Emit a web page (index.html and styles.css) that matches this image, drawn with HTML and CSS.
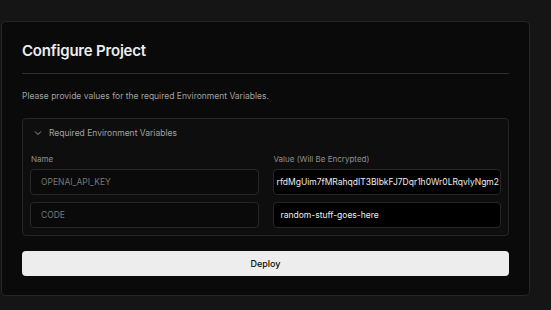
FILE: index.html
```html
<!DOCTYPE html>
<html lang="en">
<head>
  <meta charset="UTF-8" />
  <meta name="viewport" content="width=device-width, initial-scale=1.0"/>
  <title>Configure Project</title>
  <link rel="stylesheet" href="styles.css">
</head>
<body>
  <div class="page">
    <div class="card">
      <h1>Configure Project</h1>
      <div class="divider"></div>
      <p class="intro">Please provide values for the required Environment Variables.</p>

      <div class="env-box">
        <div class="env-summary">
          <svg class="chevron" width="8" height="8" viewBox="0 0 8 8">
            <path d="M1 2.5 L4 5.5 L7 2.5" fill="none" stroke="#9a9a9a" stroke-width="1"/>
          </svg>
          <span>Required Environment Variables</span>
        </div>
        <div class="env-grid">
          <div class="label">Name</div>
          <div class="label">Value (Will Be Encrypted)</div>
          <div class="input name">OPENAI_API_KEY</div>
          <div class="input value scrolled"><span>rfdMgUim7fMRahqdIT3BlbkFJ7Dqr1h0Wr0LRqvlyNgm2</span></div>
          <div class="input name">CODE</div>
          <div class="input value">random-stuff-goes-here</div>
        </div>
      </div>

      <button class="deploy">Deploy</button>
    </div>
  </div>
</body>
</html>
```

FILE: styles.css
```css
* {
  box-sizing: border-box;
}

body {
  margin: 0;
  background: #151515;
  font-family: Inter, "Noto Sans", sans-serif;
  color: #ededed;
}

.page {
  padding: 21px 21px 0 1px;
  height: 310px;
}

.card {
  background: #0a0a0a;
  border: 1px solid #262626;
  border-radius: 5px;
  padding: 19px 20px 19px 20px;
}

h1 {
  margin: 0;
  font-size: 15px;
  line-height: 20px;
  font-weight: 600;
  letter-spacing: -0.2px;
  color: #ededed;
}

.divider {
  height: 1px;
  background: #2e2e2e;
  margin-top: 12px;
}

.intro {
  margin: 16px 0 16px;
  font-size: 8.5px;
  line-height: 12px;
  color: #a1a1a1;
}

.env-box {
  border: 1px solid #262626;
  border-radius: 4px;
  background: #0e0e0e;
  padding: 0 7px 7px;
}

.env-summary {
  display: flex;
  align-items: center;
  gap: 7px;
  height: 28px;
  padding-left: 4px;
  font-size: 8.5px;
  color: #a1a1a1;
}

.env-grid {
  display: grid;
  grid-template-columns: 1fr 1fr;
  column-gap: 14px;
  row-gap: 7px;
  margin-top: 6px;
}

.label {
  font-size: 8px;
  line-height: 12px;
  color: #8f8f8f;
  padding-left: 1px;
  margin-bottom: -3px;
}

.input {
  height: 26px;
  border: 1px solid #262626;
  border-radius: 4px;
  display: flex;
  align-items: center;
  font-size: 8.5px;
  overflow: hidden;
  white-space: nowrap;
}

.input.name {
  background: #0a0a0a;
  color: #767676;
  padding-left: 10px;
}

.input.value {
  background: #000;
  color: #ededed;
  padding-left: 7px;
}

.input.scrolled {
  justify-content: flex-end;
  padding: 0 1px 0 0;
}

.deploy {
  display: block;
  width: 100%;
  height: 25px;
  margin-top: 15px;
  border: none;
  border-radius: 4px;
  background: #ededed;
  color: #0a0a0a;
  font-family: inherit;
  font-size: 9px;
  font-weight: 500;
}
```
